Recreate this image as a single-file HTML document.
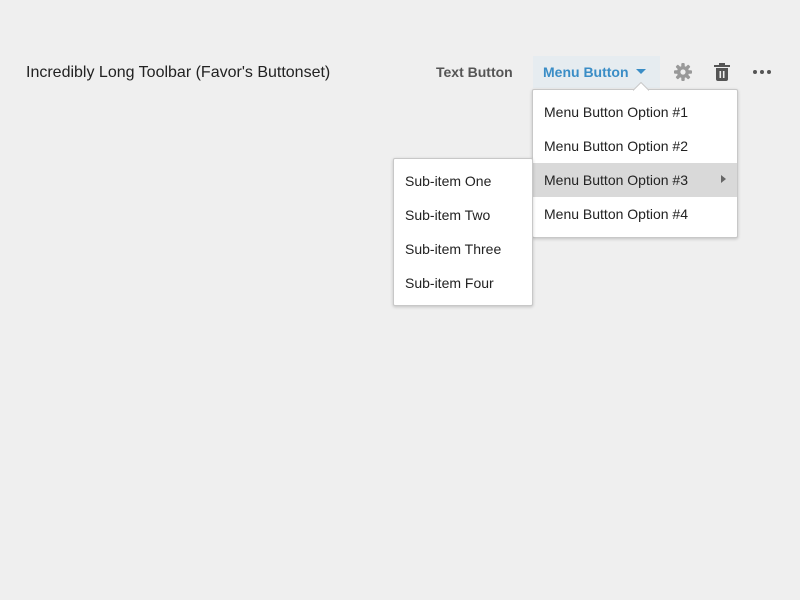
<!DOCTYPE html>
<html><head><style>
body{margin:0;width:800px;height:600px;background:#efefef;font-family:"Liberation Sans",sans-serif;position:relative;overflow:hidden}
.t{position:absolute;top:64px;left:26px;font-size:16px;color:#222}
.tb{position:absolute;top:64px;left:436px;font-size:14px;font-weight:bold;color:#555}
.mb{position:absolute;left:533px;top:56px;width:127px;height:32px;background:#e6ecf0}
.mb span{position:absolute;left:10px;top:8px;font-size:14px;font-weight:bold;color:#3a8dc6}
.mb i{position:absolute;left:103px;top:13px;border-left:5px solid transparent;border-right:5px solid transparent;border-top:5px solid #3a8dc6}
.menu{position:absolute;background:#fff;border:1px solid #c8c8c8;border-radius:2px;box-shadow:0 1px 3px rgba(0,0,0,.2)}
.it{height:34px;line-height:34px;padding-left:11px;font-size:14px;color:#222;position:relative}
.hl{background:#d9d9d9}
</style></head><body>
<div class="t">Incredibly Long Toolbar (Favor's Buttonset)</div>
<div class="tb">Text Button</div>
<div class="mb"><span>Menu Button</span><i></i></div>
<svg style="position:absolute;left:673px;top:62px" width="20" height="20" viewBox="0 0 20 20"><g fill="#999"><circle cx="10" cy="10" r="6"/><rect x="8.3" y="1" width="3.4" height="18" rx="1"/><rect x="8.3" y="1" width="3.4" height="18" rx="1" transform="rotate(45 10 10)"/><rect x="8.3" y="1" width="3.4" height="18" rx="1" transform="rotate(90 10 10)"/><rect x="8.3" y="1" width="3.4" height="18" rx="1" transform="rotate(135 10 10)"/></g><circle cx="10" cy="10" r="2.6" fill="#efefef"/></svg>
<svg style="position:absolute;left:712px;top:62px" width="20" height="20" viewBox="0 0 20 20"><g fill="#555"><rect x="2" y="3" width="16" height="2"/><rect x="7" y="1" width="6" height="3"/><path d="M4 6h12v11a2 2 0 0 1-2 2H6a2 2 0 0 1-2-2z"/></g><rect x="7.5" y="9" width="1.6" height="7" fill="#efefef"/><rect x="10.9" y="9" width="1.6" height="7" fill="#efefef"/></svg>
<svg style="position:absolute;left:752px;top:68px" width="20" height="8"><g fill="#555"><circle cx="3" cy="4" r="2"/><circle cx="10" cy="4" r="2"/><circle cx="17" cy="4" r="2"/></g></svg>
<div class="menu" style="left:532px;top:89px;width:206px;height:149px;padding-top:5px;box-sizing:border-box">
<div class="it">Menu Button Option #1</div>
<div class="it">Menu Button Option #2</div>
<div class="it hl">Menu Button Option #3<i style="position:absolute;left:188px;top:12px;border-top:4px solid transparent;border-bottom:4px solid transparent;border-left:5px solid #666"></i></div>
<div class="it">Menu Button Option #4</div>
</div>
<svg style="position:absolute;left:633px;top:82px" width="16" height="9"><path d="M0 8.5L8 0.5L16 8.5" fill="#fff" stroke="#c8c8c8"/></svg>
<div class="menu" style="left:393px;top:158px;width:140px;height:148px;padding-top:5px;box-sizing:border-box">
<div class="it">Sub-item One</div>
<div class="it">Sub-item Two</div>
<div class="it">Sub-item Three</div>
<div class="it">Sub-item Four</div>
</div>
</body></html>
